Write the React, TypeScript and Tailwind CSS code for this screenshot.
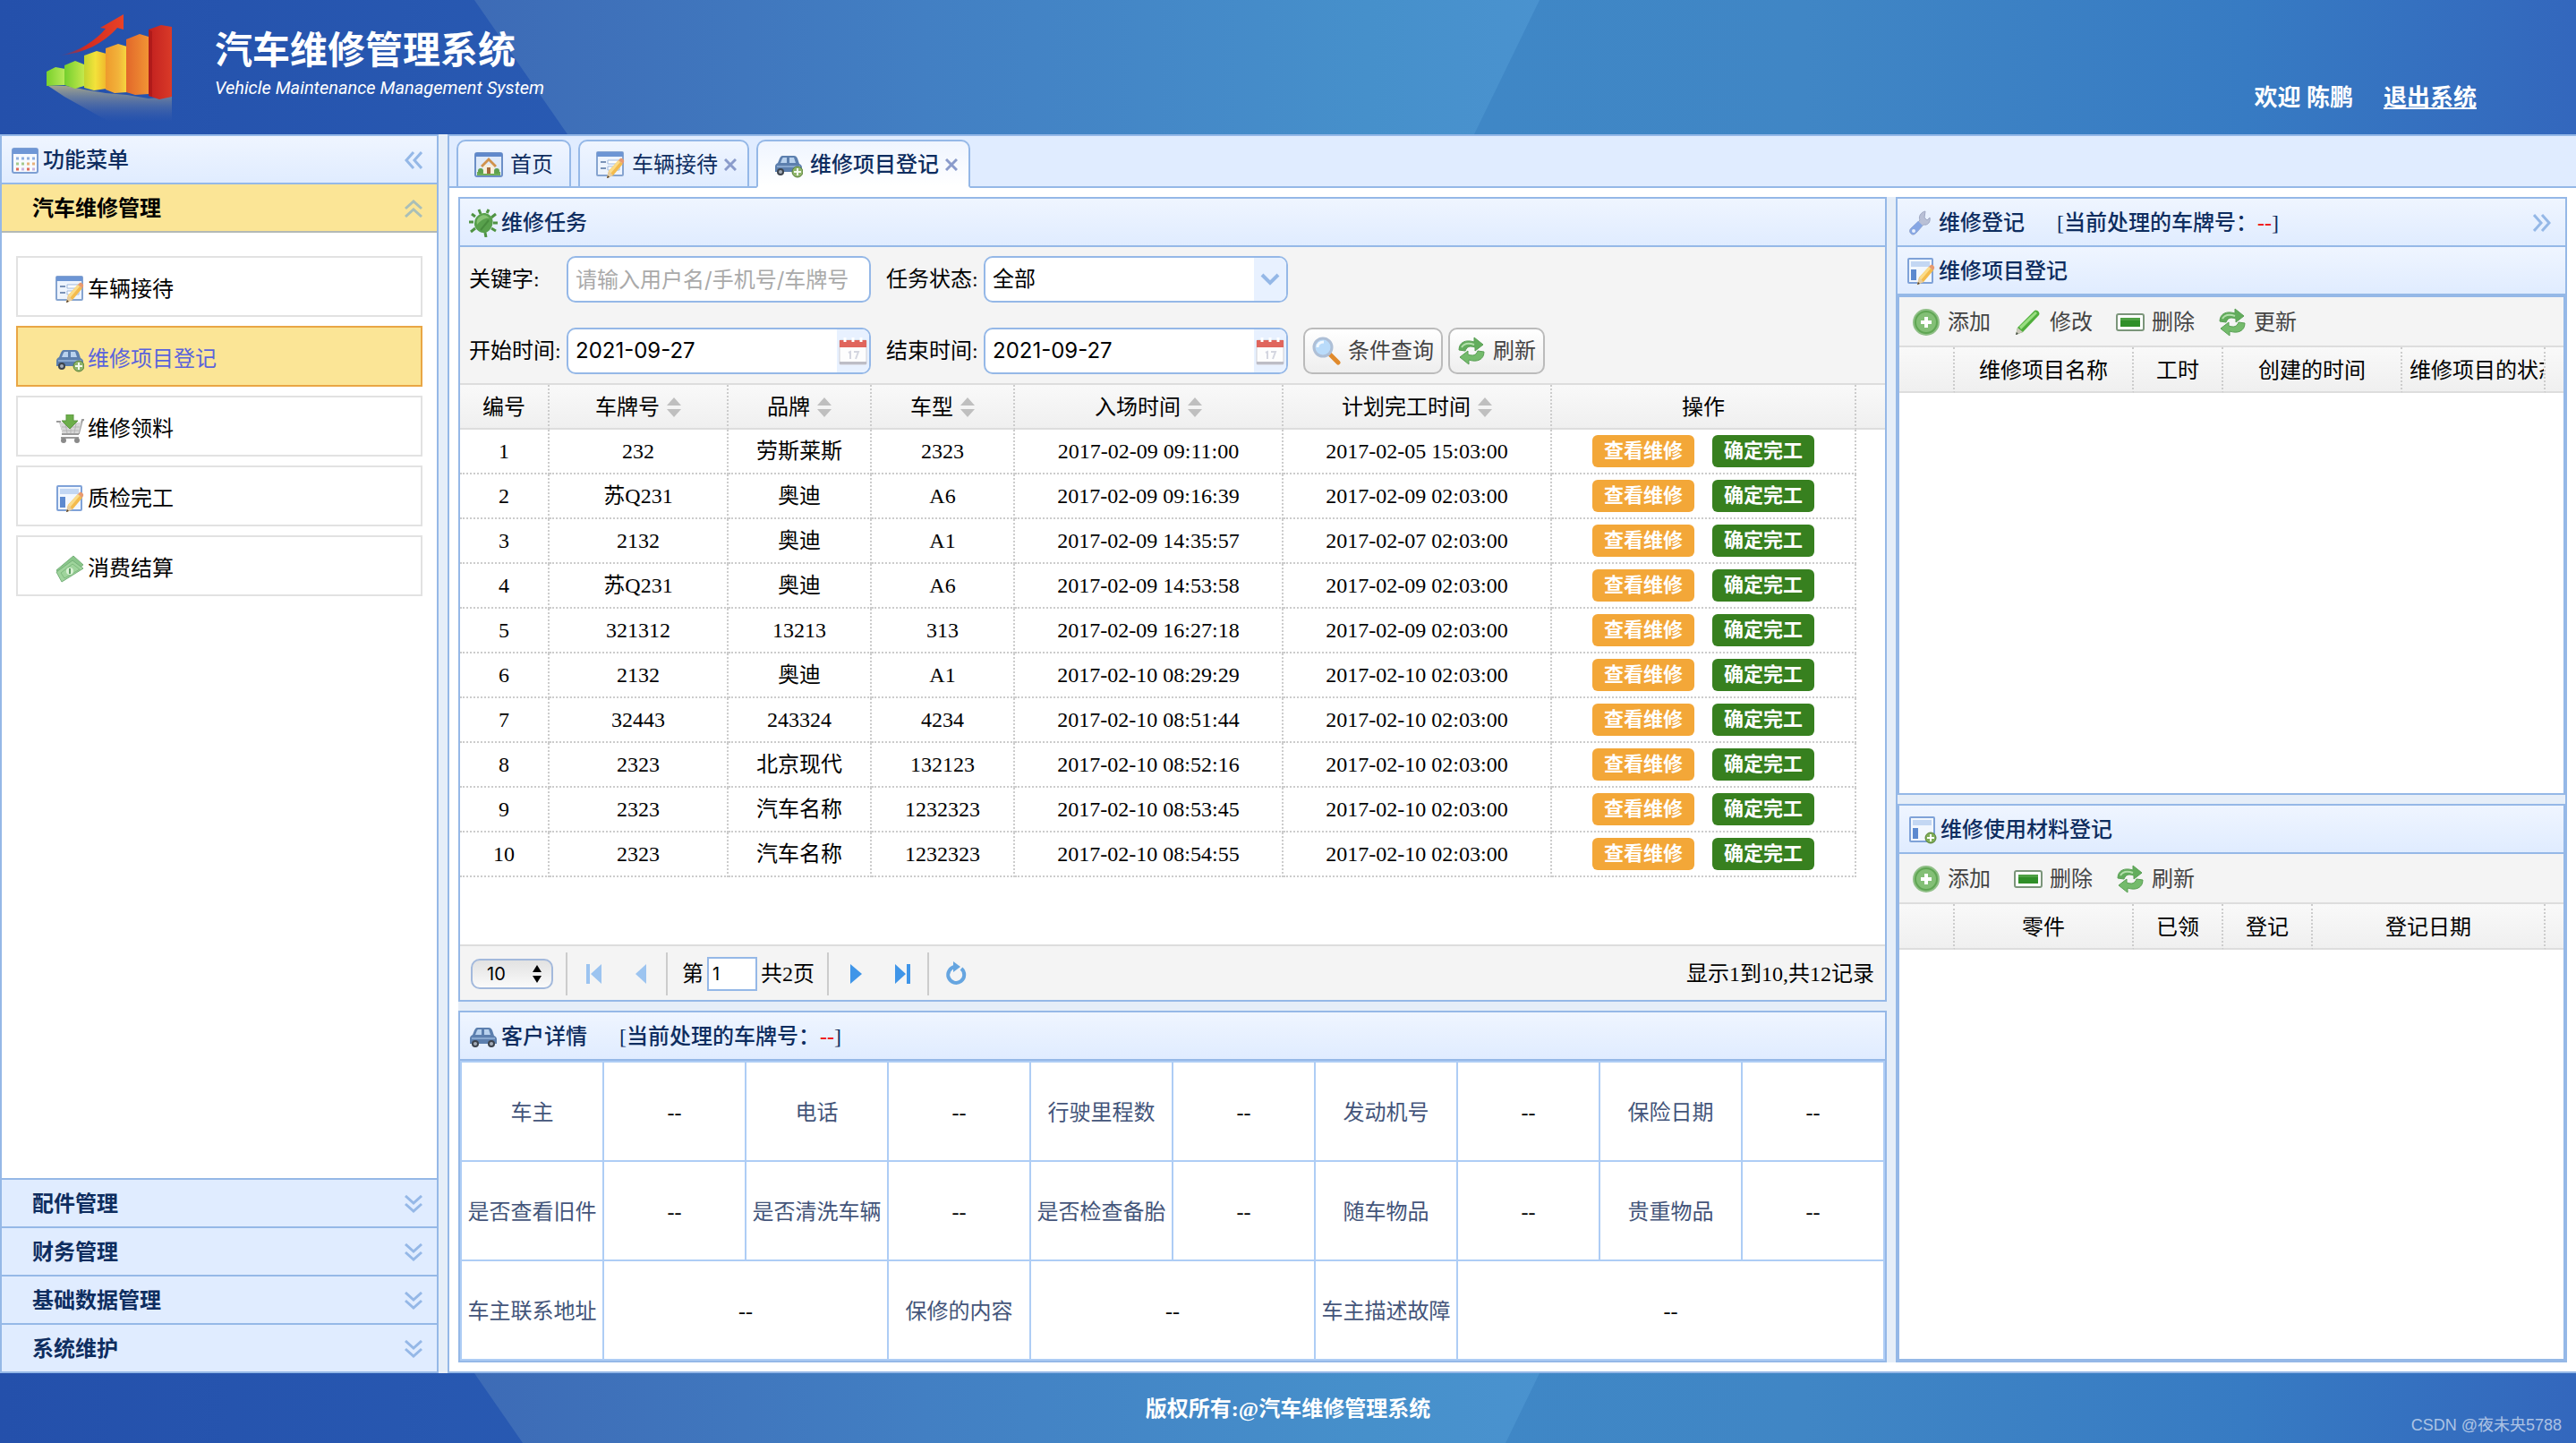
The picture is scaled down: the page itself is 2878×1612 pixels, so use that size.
import React from 'react';

type IconProps = { className?: string };
type IconType = (props: IconProps) => React.ReactElement;

const Svg = ({ children, className = 'h-8 w-8 shrink-0' }: { children: React.ReactNode; className?: string }) => (
  <svg viewBox="0 0 32 32" className={className} aria-hidden="true">{children}</svg>
);

const CalendarIcon = () => (
  <Svg>
    <rect x="2" y="3" width="28" height="27" rx="2" fill="#f7faff" stroke="#7d9fd3" strokeWidth="2" />
    <path d="M2 3h28v6H2z" fill="#6f97d6" />
    <path d="M6 14h3M12 14h3M18 14h3M24 14h3" stroke="#8fb0e0" strokeWidth="3" />
    <path d="M6 20h3M12 20h3" stroke="#a4c98d" strokeWidth="3" />
    <path d="M18 20h3M24 20h3" stroke="#e7b27c" strokeWidth="3" />
    <path d="M6 26h3M18 26h3" stroke="#e06a5a" strokeWidth="3" />
    <path d="M12 26h3M24 26h3" stroke="#c9b4e0" strokeWidth="3" />
  </Svg>
);

const HomeIcon = () => (
  <Svg>
    <rect x="1" y="3" width="30" height="26" rx="2" fill="#dfeafa" stroke="#6c8fc7" strokeWidth="2" />
    <path d="M1 3h30v4H1z" fill="#5f88cb" />
    <path d="M3 24h26v4H3z" fill="#6fae58" />
    <path d="M10 16h12v10H10z" fill="#f8efdc" />
    <path d="m7 17 9-9 9 9-2 2-7-7-7 7z" fill="#d0924c" />
    <path d="M14 19h4v7h-4z" fill="#a5683a" />
    <circle cx="7" cy="23" r="3" fill="#5fa04d" />
    <circle cx="25" cy="23" r="3" fill="#5fa04d" />
  </Svg>
);

const Pencil = () => (
  <>
    <path d="m14 23 11-12 5 4-11 13-7 3z" fill="#f4bb4c" />
    <path d="m14 23 11-12 2 2-11 13z" fill="#fbdc8a" />
    <path d="m25 11 2-2c2-1 5 2 4 4l-1 2z" fill="#e89a70" />
    <path d="m14 23 5 5-7 3z" fill="#e6cda2" />
    <path d="m12 31 1-3 2 2z" fill="#4a3a2a" />
  </>
);

const FormEditIcon = () => (
  <Svg>
    <rect x="1" y="2" width="29" height="26" rx="1" fill="#eef4fd" stroke="#86a4d0" strokeWidth="2" />
    <path d="M1 2h29v5H1z" fill="#6d95d4" />
    <path d="M5 13h6M5 20h6" stroke="#7b93b8" strokeWidth="2" />
    <path d="M13 11h13v4H13zM13 18h13v4H13z" fill="#fff" stroke="#9fb8dd" />
    <Pencil />
  </Svg>
);

const LayoutEditIcon = () => (
  <Svg>
    <rect x="2" y="2" width="27" height="27" rx="1" fill="#f2f7fe" stroke="#7fa2d8" strokeWidth="2" />
    <path d="M5 5h21v6H5z" fill="#c3d7f3" />
    <path d="M5 14h6v12H5z" fill="#5c89cf" />
    <Pencil />
  </Svg>
);

const LayoutAddIcon = () => (
  <Svg>
    <rect x="2" y="2" width="27" height="27" rx="1" fill="#f2f7fe" stroke="#7fa2d8" strokeWidth="2" />
    <path d="M5 5h21v6H5z" fill="#c3d7f3" />
    <path d="M5 14h6v12H5z" fill="#5c89cf" />
    <circle cx="25" cy="25" r="6" fill="#7fae57" stroke="#587f3a" />
    <path d="M25 21v8M21 25h8" stroke="#fff" strokeWidth="2" />
  </Svg>
);

const CarBody = () => (
  <>
    <path d="M9 6h13c2 0 3 1 4 3l2 6c2 1 3 2 3 4v5H1v-6c0-2 1-3 3-4l2-5c1-2 2-3 3-3z" fill="#5c7fae" />
    <path d="M10 8h4v6H7l2-5zM17 8h5l2 6h-7z" fill="#b9d2ee" />
    <path d="M3 17h26v2H3z" fill="#89a8cf" />
    <circle cx="7" cy="24" r="4" fill="#3c434d" />
    <circle cx="7" cy="24" r="2" fill="#a5adb8" />
    <circle cx="25" cy="24" r="4" fill="#3c434d" />
    <circle cx="25" cy="24" r="2" fill="#a5adb8" />
  </>
);

const CarIcon = () => <Svg><CarBody /></Svg>;

const CarAddIcon = () => (
  <Svg>
    <CarBody />
    <circle cx="26" cy="24" r="6" fill="#8fb56a" stroke="#587f3a" />
    <path d="M26 20v8M22 24h8" stroke="#f4faef" strokeWidth="2" />
  </Svg>
);

const BugIcon = () => (
  <Svg>
    <path d="M7 9 3 6M5 15H0M7 22l-5 4M13 6l-2-5M20 5l2-4M25 10l5-4M27 16h5M25 22l5 3M18 27l1 5" stroke="#4f9343" strokeWidth="3" fill="none" />
    <path d="M11 7c5-4 12-2 15 4 2 6-1 13-7 16-6 1-12-3-13-9 0-5 1-8 5-11z" fill="#58a04c" />
    <path d="M12 9c4-3 8-2 11 2-4-1-9 1-14 7-1-4 0-7 3-9z" fill="#86c274" />
    <path d="M22 13 13 24" stroke="#478b3d" strokeWidth="2" />
  </Svg>
);

const CartIcon = () => (
  <Svg>
    <path d="M1 8h4l4 13h17l4-15h2" fill="none" stroke="#9a9a9a" strokeWidth="2" />
    <path d="M4 9h25l-3 12H8z" fill="#d8d8d8" />
    <path d="M7 14h20M8 18h18M11 10l2 11M17 10v11M23 10l-2 11" stroke="#b4b4b4" />
    <path d="M7 22h19M6 26h20" stroke="#9b9b9b" strokeWidth="2" />
    <circle cx="9" cy="29" r="3" fill="#8a8a8a" />
    <circle cx="24" cy="29" r="3" fill="#8a8a8a" />
    <path d="M12 0h8v7h5l-9 9-9-9h5z" fill="#6cae4a" stroke="#5c9641" />
  </Svg>
);

const MoneyIcon = () => (
  <Svg>
    <path d="M1 18 20 2l11 10-20 15z" fill="#8ac68a" stroke="#76b07a" />
    <path d="M1 20 19 7l12 9L7 31z" fill="#9fd49c" stroke="#76b07a" />
    <path d="m6 21 13-10 8 6-17 10z" fill="none" stroke="#7dba7d" />
    <circle cx="16" cy="19" r="4" fill="#d9f0d4" />
    <path d="M16 16v6" stroke="#5b9c60" strokeWidth="2" />
  </Svg>
);

const WrenchIcon = () => (
  <Svg>
    <path d="m20 10 1-7c-5 1-8 6-6 10L5 22c-2 2-2 4 0 6s4 1 6-1l8-9c5 1 8-3 7-8l-3 3z" fill="#b9c0d6" stroke="#a0a9c4" />
    <path d="M13 14 5 22c-2 2-2 4 0 6s4 1 6-1l7-8z" fill="#86a6e4" />
    <circle cx="8" cy="25" r="2" fill="#e8effc" />
  </Svg>
);

const AddIcon = () => (
  <Svg>
    <circle cx="16" cy="16" r="14" fill="#5fa653" stroke="#8fbf86" strokeWidth="2" />
    <circle cx="16" cy="16" r="11" fill="#83bf76" />
    <path d="M16 10v12M10 16h12" stroke="#fff" strokeWidth="4" />
  </Svg>
);

const EditIcon = () => (
  <Svg>
    <path d="M4 22 23 3c2-2 7 2 5 5L10 27l-8 3z" fill="#4fae3b" />
    <path d="M6 21 24 4l2 2L8 24z" fill="#9ade82" />
    <path d="m4 22 6 5-8 3z" fill="#ccc7bb" />
    <path d="m2 30 1-3 2 2z" fill="#444" />
  </Svg>
);

const RemoveIcon = () => (
  <Svg>
    <rect x="1" y="7" width="30" height="18" rx="2" fill="#fff" stroke="#7b957a" strokeWidth="2" />
    <path d="M5 11h22v10H5z" fill="#2f8f28" />
    <path d="M5 11h22v3H5z" fill="#4da043" />
  </Svg>
);

const ReloadIcon = () => (
  <Svg>
    <path d="M2 15C2 6 10 3 19 6V1l10 8-9 7v-4c-6-2-9-1-11 4z" fill="#62ad5c" stroke="#5a9f55" />
    <path d="M30 17c0 9-8 12-17 9v5L3 23l9-7v4c6 2 9 1 11-4z" fill="#74bb6c" stroke="#5a9f55" />
    <path d="M5 12c3-5 8-5 14-3" stroke="#b3dfab" strokeWidth="2" fill="none" />
  </Svg>
);

const SearchIcon = () => (
  <Svg>
    <path d="m20 20 9 9" stroke="#e08a2c" strokeWidth="5" strokeLinecap="round" />
    <circle cx="12" cy="12" r="10" fill="#b9dbfa" stroke="#aebfd6" strokeWidth="3" />
    <path d="M6 12c0-4 3-6 7-6" stroke="#f2f9ff" strokeWidth="3" fill="none" />
  </Svg>
);

const DateIcon = () => (
  <Svg>
    <rect x="1" y="4" width="30" height="27" rx="1" fill="#fdfdfd" stroke="#cfcfd6" />
    <path d="M1 4h30v8H1z" fill="#e0655c" />
    <path d="M7 1v5M16 1v5M25 1v5" stroke="#fff" strokeWidth="3" />
    <path d="M1 28h30v3H1z" fill="#bdbdc6" />
    <path d="m11 18 2-1v8M17 17h5l-3 8" stroke="#d4d6e0" strokeWidth="2" fill="none" />
  </Svg>
);

const Chevrons = ({ className }: IconProps) => (
  <svg viewBox="0 0 20 20" className={'h-5 w-5 ' + className} fill="none" stroke="currentColor" strokeWidth="3" aria-hidden="true">
    <path d="m1 1 9 8 9-8M1 10l9 8 9-8" />
  </svg>
);

const Logo = () => (
  <svg viewBox="0 0 140 120" className="h-[120px] w-[140px] shrink-0" aria-hidden="true">
    <defs>
      <linearGradient id="g1" x1="0" x2="1"><stop offset="0" stopColor="#7ad12c" /><stop offset="1" stopColor="#b9ea5a" /></linearGradient>
      <linearGradient id="g2" x1="0" x2="1"><stop offset="0" stopColor="#74cf2e" /><stop offset="1" stopColor="#c4e84c" /></linearGradient>
      <linearGradient id="g3" x1="0" x2="1"><stop offset="0" stopColor="#c3d430" /><stop offset=".5" stopColor="#f3e23a" /><stop offset="1" stopColor="#f0b62c" /></linearGradient>
      <linearGradient id="g4" x1="0" x2="1"><stop offset="0" stopColor="#ee9a2d" /><stop offset=".6" stopColor="#f2b33a" /><stop offset="1" stopColor="#f6d93f" /></linearGradient>
      <linearGradient id="g5" x1="0" x2="1"><stop offset="0" stopColor="#e2672a" /><stop offset="1" stopColor="#f19434" /></linearGradient>
      <linearGradient id="g6" x1="0" x2="1"><stop offset="0" stopColor="#c2201f" /><stop offset="1" stopColor="#d93a28" /></linearGradient>
      <linearGradient id="g7" x1="0" y1="0" x2="0" y2="1"><stop offset="0" stopColor="#d8c880" stopOpacity=".7" /><stop offset="1" stopColor="#5a6cae" stopOpacity="0" /></linearGradient>
      <linearGradient id="g8" x1="0" x2="1"><stop offset="0" stopColor="#c3201f" stopOpacity="0" /><stop offset=".4" stopColor="#d22a20" /><stop offset="1" stopColor="#e84226" /></linearGradient>
    </defs>
    <path d="M2 80h20l20 4 24 4 24 2 24 4 26-2v28H70L20 92z" fill="url(#g7)" />
    <path d="m0 64 10-5 11 2v18L0 80z" fill="url(#g1)" />
    <path d="m20 57 12-5 10 4v24l-10 3-12-4z" fill="url(#g2)" />
    <path d="m42 46 14-5 11 3v39l-14 2-11-3z" fill="url(#g3)" />
    <path d="m66 38 14-5 10 3v51l-14 1-10-4z" fill="url(#g4)" />
    <path d="m89 28 15-6 10 3v64l-15 1-10-3z" fill="url(#g5)" />
    <path d="m114 17 14-5 12 2v78l-14 3-12-4z" fill="url(#g6)" />
    <path d="M114 17v74l4 1V19z" fill="#b01a1a" />
    <path d="M14 46c22-4 40-16 52-30l-6-1L86 0v17l-7-2C64 32 42 44 14 46z" fill="url(#g8)" />
  </svg>
);

// blue backdrop shared by the header and the footer
const Backdrop = () => (
  <svg viewBox="0 0 2878 150" preserveAspectRatio="xMinYMin slice" className="absolute inset-0 h-full w-full" aria-hidden="true">
    <defs>
      <linearGradient id="bg1" x1="0" x2="1"><stop offset="0" stopColor="#2450ab" /><stop offset="1" stopColor="#295bb3" /></linearGradient>
      <linearGradient id="bg2" x1="0" x2="1"><stop offset="0" stopColor="#3d6bb6" /><stop offset=".4" stopColor="#427fc3" /><stop offset=".8" stopColor="#4690cb" /><stop offset="1" stopColor="#4b93d0" /></linearGradient>
      <linearGradient id="bg3" x1="0" x2="1"><stop offset="0" stopColor="#3f87c6" /><stop offset=".3" stopColor="#4086c5" /><stop offset=".7" stopColor="#377bc3" /><stop offset="1" stopColor="#3367bd" /></linearGradient>
    </defs>
    <path d="M0 0h700v150H0z" fill="url(#bg1)" />
    <path d="M530 0h1250v150H634z" fill="url(#bg2)" />
    <path d="M1720 0h1158v150H1647z" fill="url(#bg3)" />
  </svg>
);

const Plate = () => <span className="ml-9">[当前处理的车牌号：<span className="font-bold text-[#f02020]">--</span>]</span>;

const PanelHeader = ({ icon: Icon, title, plate, children }: { icon: IconType; title: string; plate?: boolean; children?: React.ReactNode }) => (
  <div className="flex h-[54px] shrink-0 items-center border-b-2 border-[#95b8e7] bg-linear-to-b from-[#eff5ff] to-[#e0ecff] pt-[2px] pr-4 pl-[10px] font-medium text-[#0e2d5f]">
    <Icon />
    <h2 className="ml-1">{title}{plate && <Plate />}</h2>
    {children}
  </div>
);

const menuItems = [
  { icon: FormEditIcon, text: '车辆接待' },
  { icon: CarAddIcon, text: '维修项目登记', selected: true },
  { icon: CartIcon, text: '维修领料' },
  { icon: LayoutEditIcon, text: '质检完工' },
  { icon: MoneyIcon, text: '消费结算' },
];

const closedMenus = ['配件管理', '财务管理', '基础数据管理', '系统维护'];

const Sidebar = () => (
  <aside className="flex w-[490px] shrink-0 flex-col border-2 border-[#95b8e7] bg-white">
    <PanelHeader icon={CalendarIcon} title="功能菜单">
      <button aria-label="收起菜单" className="ml-auto text-[#95b8e7]"><Chevrons className="rotate-90" /></button>
    </PanelHeader>
    <button className="flex h-[54px] items-center border-b-2 border-[#b3b9b6] bg-[#fbe596] pt-[2px] pr-4 pl-[34px] font-bold">
      汽车维修管理
      <Chevrons className="ml-auto rotate-180 text-[#a9bfb8]" />
    </button>
    <nav className="flex flex-1 flex-col gap-[10px] px-4 pt-[26px]">
      {menuItems.map(({ icon: Icon, text, selected }) => (
        <a
          key={text}
          href="#"
          className={selected
            ? 'flex h-[68px] items-center gap-1 border-2 border-[#e9a645] bg-[#fbe596] pt-[5px] pl-[42px] text-[#5a63dc]'
            : 'flex h-[68px] items-center gap-1 border-2 border-[#e2e2e2] pt-[5px] pl-[42px]'}
        >
          <Icon />
          {text}
        </a>
      ))}
    </nav>
    {closedMenus.map((text) => (
      <button key={text} className="flex h-[54px] items-center border-t-2 border-[#95b8e7] bg-[#e0ecff] pt-[2px] pr-4 pl-[34px] font-bold text-[#0e2d5f]">
        {text}
        <Chevrons className="ml-auto text-[#95b8e7]" />
      </button>
    ))}
  </aside>
);

const tabs = [
  { icon: HomeIcon, text: '首页' },
  { icon: FormEditIcon, text: '车辆接待', closable: true },
  { icon: CarAddIcon, text: '维修项目登记', closable: true, selected: true },
];

const Tabs = () => (
  <div className="relative flex gap-2 bg-[#e0ecff] px-2 pt-1">
    <div className="absolute inset-x-0 bottom-0 h-[2px] bg-[#95b8e7]" />
    {tabs.map(({ icon: Icon, text, closable, selected }) => (
      <div
        key={text}
        className={'relative flex h-[54px] items-center rounded-t-[10px] border-2 border-[#95b8e7] pt-[2px] pl-[18px] text-[#0e2d5f] ' +
          (closable ? 'pr-3 ' : 'pr-[18px] ') +
          (selected ? 'border-b-white bg-linear-to-b from-[#eff5ff] to-white font-medium' : 'bg-linear-to-b from-[#eff5ff] to-[#e0ecff]')}
      >
        <button className="flex items-center gap-2"><Icon />{text}</button>
        {closable && (
          <button aria-label="关闭" className="ml-[7px]">
            <svg viewBox="0 0 14 14" className="h-[14px] w-[14px]" aria-hidden="true"><path d="m1 1 12 12M13 1 1 13" stroke="#8a9bcb" strokeWidth="3" /></svg>
          </button>
        )}
      </div>
    ))}
  </div>
);

const DateField = ({ id, label }: { id: string; label: string }) => (
  <div className="flex items-center">
    <label htmlFor={id} className="w-[109px]">{label}</label>
    <div className="flex h-[52px] w-[340px] overflow-hidden rounded-[10px] border-2 border-[#95b8e7] bg-white">
      <input id={id} defaultValue="2021-09-27" className="min-w-0 flex-1 px-2 font-['Inter',sans-serif] outline-none" />
      <button aria-label="选择日期" className="flex w-9 items-center justify-center bg-[#e8f1ff]"><DateIcon /></button>
    </div>
  </div>
);

const ToolButton = ({ icon: Icon, text }: { icon: IconType; text: string }) => (
  <button className="flex items-center gap-2 text-[#444]"><Icon />{text}</button>
);

const BoxButton = ({ icon: Icon, text }: { icon: IconType; text: string }) => (
  <button className="flex h-[52px] items-center gap-2 rounded-[10px] border-2 border-[#bbb] bg-linear-to-b from-white to-[#eee] px-2 text-[#444]"><Icon />{text}</button>
);

const SearchBar = () => (
  <form className="flex flex-col gap-7 border-b-2 border-[#ddd] bg-[#f4f4f4] p-[10px]">
    <div className="flex gap-[17px]">
      <div className="flex items-center">
        <label htmlFor="keyword" className="w-[109px]">关键字:</label>
        <input id="keyword" placeholder="请输入用户名/手机号/车牌号" className="h-[52px] w-[340px] rounded-[10px] border-2 border-[#95b8e7] bg-white px-2 font-['Inter','Noto_Sans_CJK_SC',sans-serif] placeholder:text-[#aaa]" />
      </div>
      <div className="flex items-center">
        <label htmlFor="status" className="w-[109px]">任务状态:</label>
        <div className="relative h-[52px] w-[340px] overflow-hidden rounded-[10px] border-2 border-[#95b8e7] bg-white">
          <select id="status" className="h-full w-full appearance-none px-2 font-['Inter','Noto_Sans_CJK_SC',sans-serif]">
            <option>全部</option>
          </select>
          <div className="pointer-events-none absolute inset-y-0 right-0 flex w-9 items-center justify-center bg-[#e8f1ff]">
            <svg viewBox="0 0 22 14" className="h-[14px] w-[22px]" aria-hidden="true"><path d="m2 2 9 9 9-9" fill="none" stroke="#95b8e7" strokeWidth="4" /></svg>
          </div>
        </div>
      </div>
    </div>
    <div className="flex gap-[17px]">
      <DateField id="start" label="开始时间:" />
      <DateField id="end" label="结束时间:" />
      <div className="flex gap-[6px]">
        <BoxButton icon={SearchIcon} text="条件查询" />
        <BoxButton icon={ReloadIcon} text="刷新" />
      </div>
    </div>
  </form>
);

const taskColumns = [
  { title: '编号', width: 'w-[100px]' },
  { title: '车牌号', width: 'w-[200px]', sortable: true },
  { title: '品牌', width: 'w-[160px]', sortable: true },
  { title: '车型', width: 'w-[160px]', sortable: true },
  { title: '入场时间', width: 'w-[300px]', sortable: true },
  { title: '计划完工时间', width: 'w-[300px]', sortable: true },
  { title: '操作', width: 'w-[340px]' },
];

const tasks = [
  ['1', '232', '劳斯莱斯', '2323', '2017-02-09 09:11:00', '2017-02-05 15:03:00'],
  ['2', '苏Q231', '奥迪', 'A6', '2017-02-09 09:16:39', '2017-02-09 02:03:00'],
  ['3', '2132', '奥迪', 'A1', '2017-02-09 14:35:57', '2017-02-07 02:03:00'],
  ['4', '苏Q231', '奥迪', 'A6', '2017-02-09 14:53:58', '2017-02-09 02:03:00'],
  ['5', '321312', '13213', '313', '2017-02-09 16:27:18', '2017-02-09 02:03:00'],
  ['6', '2132', '奥迪', 'A1', '2017-02-10 08:29:29', '2017-02-10 02:03:00'],
  ['7', '32443', '243324', '4234', '2017-02-10 08:51:44', '2017-02-10 02:03:00'],
  ['8', '2323', '北京现代', '132123', '2017-02-10 08:52:16', '2017-02-10 02:03:00'],
  ['9', '2323', '汽车名称', '1232323', '2017-02-10 08:53:45', '2017-02-10 02:03:00'],
  ['10', '2323', '汽车名称', '1232323', '2017-02-10 08:54:55', '2017-02-10 02:03:00'],
];

const TaskTable = () => (
  <table className="w-full table-fixed border-separate border-spacing-0 text-center">
    <thead>
      <tr className="h-[50px] bg-linear-to-b from-[#f9f9f9] to-[#efefef]">
        {taskColumns.map(({ title, width, sortable }) => (
          <th key={title} className={'border-r-2 border-b-2 border-r-[#ccc] border-b-[#ddd] p-0 font-normal [border-right-style:dotted] ' + width}>
            <div className="flex items-center justify-center gap-2 pt-[2px]">
              {title}
              {sortable && <svg viewBox="0 0 16 22" className="h-[22px] w-4" aria-hidden="true"><path d="m8 0 8 9H0zM8 22l8-9H0z" fill="#bfbfbf" /></svg>}
            </div>
          </th>
        ))}
        <th className="border-b-2 border-[#ddd]" />
      </tr>
    </thead>
    <tbody>
      {tasks.map((row) => (
        <tr key={row[0]} className="h-[50px]">
          {row.map((cell, index) => (
            <td key={index} className="border-r-2 border-b-2 border-dotted border-[#ccc] p-0">{cell}</td>
          ))}
          <td className="border-r-2 border-b-2 border-dotted border-[#ccc] p-0">
            <div className="flex justify-center gap-5 text-[22px] leading-9 font-bold text-white">
              <button className="rounded-md bg-[#f3a738] px-[13px]">查看维修</button>
              <button className="rounded-md bg-[#37801f] px-[13px]">确定完工</button>
            </div>
          </td>
          <td />
        </tr>
      ))}
    </tbody>
  </table>
);

const PageButton = ({ label, path, disabled }: { label: string; path: string; disabled?: boolean }) => (
  <button aria-label={label} disabled={disabled} className={disabled ? 'text-[#9cc4f0]' : 'text-[#3f95e8]'}>
    <svg viewBox="0 0 28 28" className="h-7 w-7" fill="currentColor" aria-hidden="true"><path d={path} /></svg>
  </button>
);

const Separator = () => <div className="mr-4 ml-[14px] h-12 w-[2px] bg-[#ccc]" />;

const Pager = () => (
  <div className="flex h-[62px] items-center border-t-2 border-[#ddd] bg-[#f4f4f4] px-3 pt-[2px]">
    <div className="relative">
      <select aria-label="每页条数" className="h-[34px] w-[92px] appearance-none rounded-[10px] border-2 border-[#a3b9dc] bg-linear-to-b from-[#e2e2e2] to-[#fafafa] pl-4 font-['Inter',sans-serif] text-[20px] leading-[30px]">
        <option>10</option>
      </select>
      <svg viewBox="0 0 12 20" className="pointer-events-none absolute top-[7px] right-3 h-5 w-3" aria-hidden="true"><path d="m6 0 5 8H1zM6 20l5-8H1z" /></svg>
    </div>
    <Separator />
    <div className="flex gap-6">
      <PageButton label="首页" disabled path="M5 3h4v22H5zM22 3v22L10 14z" />
      <PageButton label="上一页" disabled path="M20 3v22L8 14z" />
    </div>
    <Separator />
    <div className="flex items-center gap-1">
      <label htmlFor="page">第</label>
      <input id="page" defaultValue="1" className="h-[38px] w-14 border-2 border-[#95b8e7] bg-white px-1 font-['Inter',sans-serif] text-[20px]" />
      <span>共2页</span>
    </div>
    <Separator />
    <div className="flex gap-6">
      <PageButton label="下一页" path="M8 3v22l13-11z" />
      <PageButton label="末页" path="M19 3h4v22h-4zM6 3v22l12-11z" />
    </div>
    <Separator />
    <button aria-label="刷新列表" className="text-[#66a5e0]">
      <svg viewBox="0 0 28 28" className="h-7 w-7" aria-hidden="true">
        <path d="M20 8a9 9 0 1 1-7-2" fill="none" stroke="currentColor" strokeWidth="4" />
        <path d="M11 0v12l8-6z" fill="currentColor" />
      </svg>
    </button>
    <span className="ml-auto">显示1到10,共12记录</span>
  </div>
);

const details = [
  [{ text: '车主' }, { text: '--' }, { text: '电话' }, { text: '--' }, { text: '行驶里程数' }, { text: '--' }, { text: '发动机号' }, { text: '--' }, { text: '保险日期' }, { text: '--' }],
  [{ text: '是否查看旧件' }, { text: '--' }, { text: '是否清洗车辆' }, { text: '--' }, { text: '是否检查备胎' }, { text: '--' }, { text: '随车物品' }, { text: '--' }, { text: '贵重物品' }, { text: '--' }],
  [{ text: '车主联系地址' }, { text: '--', span: 2 }, { text: '保修的内容' }, { text: '--', span: 2 }, { text: '车主描述故障' }, { text: '--', span: 3 }],
] as { text: string; span?: number }[][];

const DetailTable = () => (
  <table className="w-full table-fixed border-collapse text-center">
    <tbody>
      {details.map((row, index) => (
        <tr key={index} className="h-[111px]">
          {row.map(({ text, span }, i) => (
            <td key={i} colSpan={span} className={'border-2 border-[#aecdf5] p-0 pt-[2px] ' + (text === '--' ? 'text-black' : 'text-[#44557a]')}>{text}</td>
          ))}
        </tr>
      ))}
    </tbody>
  </table>
);

const HeadTable = ({ columns }: { columns: { title: string; width: string }[] }) => (
  <table className="w-full table-fixed border-separate border-spacing-0">
    <thead>
      <tr className="h-[51px] bg-linear-to-b from-[#f9f9f9] to-[#efefef]">
        <th className="w-[62px] border-r-2 border-b-2 border-r-[#ccc] border-b-[#ddd] [border-right-style:dotted]" />
        {columns.map(({ title, width }) => (
          <th key={title} className={'border-r-2 border-b-2 border-r-[#ccc] border-b-[#ddd] p-0 font-normal [border-right-style:dotted] ' + width}>
            <div className="overflow-hidden px-2 pt-[2px] whitespace-nowrap">{title}</div>
          </th>
        ))}
        <th className="border-b-2 border-[#ddd]" />
      </tr>
    </thead>
  </table>
);

const itemColumns = [
  { title: '维修项目名称', width: 'w-[200px]' },
  { title: '工时', width: 'w-[100px]' },
  { title: '创建的时间', width: 'w-[200px]' },
  { title: '维修项目的状态', width: 'w-[160px]' },
];

const partColumns = [
  { title: '零件', width: 'w-[200px]' },
  { title: '已领', width: 'w-[100px]' },
  { title: '登记', width: 'w-[100px]' },
  { title: '登记日期', width: 'w-[260px]' },
];

const RegisterPanel = () => (
  <section className="flex w-[750px] shrink-0 flex-col border-2 border-[#95b8e7] bg-[#e6eef8]">
    <PanelHeader icon={WrenchIcon} title="维修登记" plate>
      <button aria-label="收起面板" className="ml-auto text-[#95b8e7]"><Chevrons className="-rotate-90" /></button>
    </PanelHeader>
    <PanelHeader icon={LayoutEditIcon} title="维修项目登记" />
    <div className="min-h-[558px] border-2 border-[#95b8e7] bg-white">
      <div className="flex h-14 items-center gap-[26px] border-b-2 border-[#ddd] bg-[#f4f4f4] px-[14px] pt-[2px]">
        <ToolButton icon={AddIcon} text="添加" />
        <ToolButton icon={EditIcon} text="修改" />
        <ToolButton icon={RemoveIcon} text="删除" />
        <ToolButton icon={ReloadIcon} text="更新" />
      </div>
      <HeadTable columns={itemColumns} />
    </div>
    <div className="mt-[10px] flex flex-1 flex-col border-2 border-[#95b8e7] bg-white">
      <PanelHeader icon={LayoutAddIcon} title="维修使用材料登记" />
      <div className="flex h-14 items-center gap-[26px] border-b-2 border-[#ddd] bg-[#f4f4f4] px-[14px] pt-[2px]">
        <ToolButton icon={AddIcon} text="添加" />
        <ToolButton icon={RemoveIcon} text="删除" />
        <ToolButton icon={ReloadIcon} text="刷新" />
      </div>
      <HeadTable columns={partColumns} />
    </div>
  </section>
);

const App = () => {
  return (
    <div className="flex min-h-screen flex-col bg-[#e6eef8] font-['Liberation_Serif','Noto_Sans_CJK_SC',serif] text-[24px] leading-8 text-black">
      <header className="relative flex h-[150px] items-start overflow-hidden text-white">
        <Backdrop />
        <div className="relative flex flex-1 gap-12 pt-4 pl-[52px]">
          <Logo />
          <div className="pt-4 font-['Liberation_Sans','Noto_Sans_CJK_SC',sans-serif]">
            <h1 className="text-[42px] leading-[50px] font-bold">汽车维修管理系统</h1>
            <p className="mt-[2px] font-['Roboto',sans-serif] text-[20px] leading-7 italic">Vehicle Maintenance Management System</p>
          </div>
        </div>
        <div className="relative flex gap-[34px] pt-[94px] pr-[111px] text-[26px] font-bold">
          <span>欢迎 陈鹏</span>
          <a href="#" className="underline">退出系统</a>
        </div>
      </header>

      <main className="flex flex-1 gap-[10px]">
        <Sidebar />
        <div className="flex min-w-0 flex-1 flex-col border-y-2 border-l-2 border-[#95b8e7] bg-white">
          <Tabs />
          <div className="flex flex-1 p-[10px]">
            <div className="flex flex-1 gap-[10px] bg-[#e6eef8]">
              <div className="flex min-w-0 flex-1 flex-col gap-[10px]">
                <section className="flex flex-1 flex-col border-2 border-[#95b8e7] bg-white">
                  <PanelHeader icon={BugIcon} title="维修任务" />
                  <SearchBar />
                  <div className="flex-1"><TaskTable /></div>
                  <Pager />
                </section>
                <section className="border-2 border-[#95b8e7] bg-white">
                  <PanelHeader icon={CarIcon} title="客户详情" plate />
                  <DetailTable />
                </section>
              </div>
              <RegisterPanel />
            </div>
          </div>
        </div>
      </main>

      <footer className="relative flex h-[78px] items-center justify-center pt-[2px] text-white">
        <Backdrop />
        <p className="relative font-bold">版权所有:@汽车维修管理系统</p>
        <span className="absolute right-4 bottom-1 font-['Liberation_Sans','Noto_Sans_CJK_SC',sans-serif] text-[18px] text-white/60">CSDN @夜未央5788</span>
      </footer>
    </div>
  );
};

export default App;
